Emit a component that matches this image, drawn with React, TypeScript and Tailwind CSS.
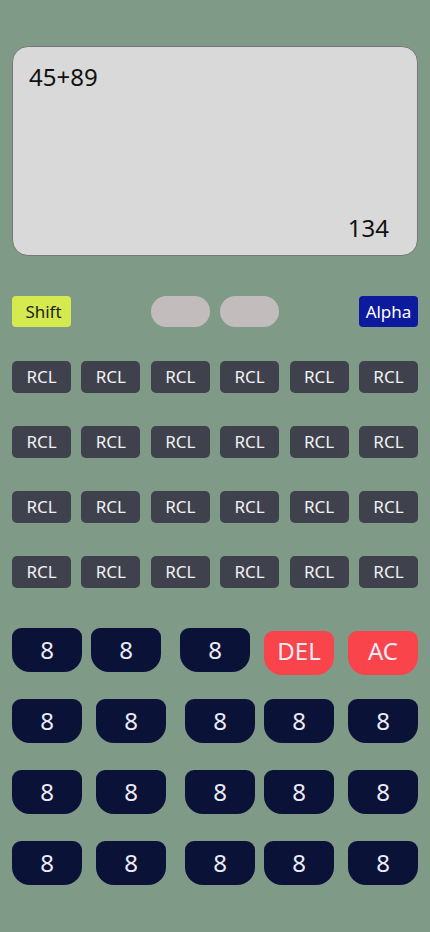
import React from 'react';

const FONT = { fontFamily: '"Noto Sans", "Open Sans", sans-serif' };

function Rcl() {
  return (
    <button
      type="button"
      className="flex h-8 w-[59px] items-center justify-center rounded-[5px] bg-[#3f424c] text-[17px] text-[#f1f1f4]"
    >
      RCL
    </button>
  );
}

function Key({ label = '8', red = false, className = '' }: { label?: string; red?: boolean; className?: string }) {
  return (
    <button
      type="button"
      className={`flex h-11 w-[70px] items-center justify-center rounded-t-[9px] rounded-b-[18px] text-[24px] text-[#ecebf4] ${
        red ? 'bg-[#f9444b] pb-[4px]' : 'bg-[#0a1238]'
      } ${className}`}
    >
      {label}
    </button>
  );
}

export default function App() {
  const rclRows = [0, 1, 2, 3];

  return (
    <div className="min-h-[932px] w-full bg-[#7f9a86] px-3 pt-[46px]" style={FONT}>
      {/* display */}
      <div className="flex h-[210px] flex-col justify-between rounded-2xl border border-[#777] bg-[#d9d9d9] pb-[9px] pl-4 pr-[28px] pt-[12px] text-[24px] text-[#111]">
        <div>45+89</div>
        <div className="text-right">134</div>
      </div>

      {/* mode row */}
      <div className="mt-[40px] flex items-center">
        <button
          type="button"
          className="flex h-[31px] w-[59px] items-center justify-center rounded-[4px] bg-[#d4ea4f] pl-1 text-[17px] text-[#222]"
        >
          Shift
        </button>
        <div className="ml-[80px] h-[31px] w-[59px] rounded-full bg-[#c3bcbc]" />
        <div className="ml-[10px] h-[31px] w-[59px] rounded-full bg-[#c3bcbc]" />
        <button
          type="button"
          className="ml-auto flex h-[31px] w-[59px] items-center justify-center rounded-[4px] bg-[#0c1a9e] text-[17px] text-white"
        >
          Alpha
        </button>
      </div>

      {/* RCL grid */}
      <div className="mt-[34px] flex flex-col gap-[33px]">
        {rclRows.map((r) => (
          <div key={r} className="flex justify-between">
            {[0, 1, 2, 3, 4, 5].map((c) => (
              <Rcl key={c} />
            ))}
          </div>
        ))}
      </div>

      {/* number keys */}
      <div className="mt-10 flex flex-col">
        <div className="flex h-11 items-start">
          <Key />
          <Key className="ml-[9px]" />
          <Key className="ml-[19px]" />
          <Key red label="DEL" className="ml-[14px] mt-[3px]" />
          <Key red label="AC" className="ml-[14px] mt-[3px]" />
        </div>
        <div className="mt-[27px] flex flex-col gap-[27px]">
          {[0, 1, 2].map((r) => (
            <div key={r} className="flex">
              <Key />
              <Key className="ml-[14px]" />
              <Key className="ml-[19px]" />
              <Key className="ml-[9px]" />
              <Key className="ml-[14px]" />
            </div>
          ))}
        </div>
      </div>
    </div>
  );
}
